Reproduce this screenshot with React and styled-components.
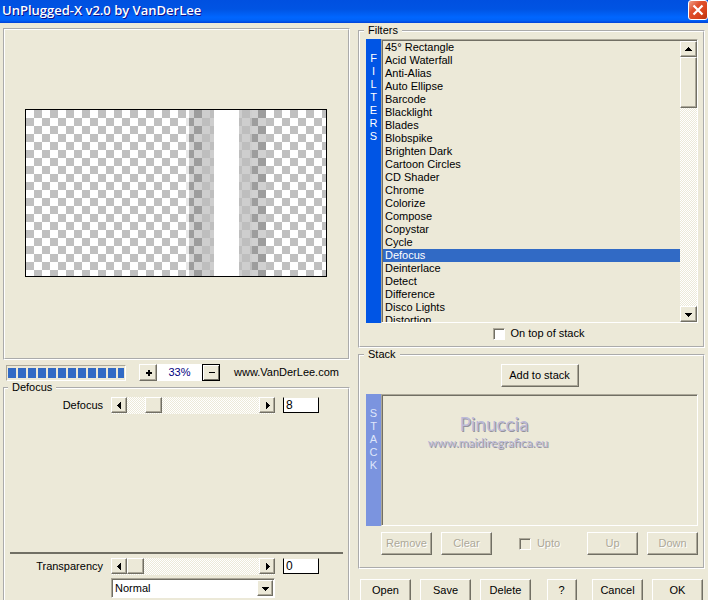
import React, { useState } from 'react';
import styled, { createGlobalStyle, css } from 'styled-components';

const face = '#ece9d8';
const shade = '#aca899';
const dark = '#716f64';

const GlobalStyle = createGlobalStyle`
  * {
    box-sizing: border-box;
  }
  body {
    margin: 0;
    background: ${face};
  }
  body, button, input, select {
    font-family: "Liberation Sans", Arial, sans-serif;
    font-size: 11px;
    line-height: 13px;
    color: #000;
  }
`;

const raised = css`
  background: ${face};
  border: 1px solid;
  border-color: #fff ${dark} ${dark} #fff;
  box-shadow: inset -1px -1px 0 ${shade};
`;

const sunken = css`
  border: 1px solid;
  border-color: ${shade} #fff #fff ${shade};
  box-shadow: inset 1px 1px 0 ${dark};
`;

const dither = css`
  background: repeating-conic-gradient(#fff 0 25%, ${face} 0 50%) 0 0 / 2px 2px;
`;

const Dialog = styled.main`
  height: 100vh;
  overflow: hidden;
  display: flex;
  flex-direction: column;
  background: ${face};
`;

const TitleBar = styled.header`
  flex: none;
  display: flex;
  justify-content: space-between;
  align-items: flex-start;
  height: 23px;
  padding-left: 2px;
  background: linear-gradient(#0050e0 0, #0054e3 40%, #0066ff 75%, #0062f8 88%, #0042d8 100%);
  h1 {
    margin: 0;
    font: 600 13px/20px "Open Sans", "Noto Sans", sans-serif;
    color: #fff;
    text-shadow: 1px 1px 0 #0f1089;
  }
`;

const CloseButton = styled.button`
  display: flex;
  align-items: center;
  justify-content: center;
  width: 20px;
  height: 20px;
  padding: 0;
  border: 1px solid #fff;
  border-radius: 3px;
  background: linear-gradient(135deg, #f0a088 0, #e0522f 35%, #d8431c 70%, #b83210 100%);
`;

const Columns = styled.div`
  flex: 1 0 auto;
  display: grid;
  grid-template-columns: minmax(0, 1fr) minmax(0, 1fr);
  gap: 8px;
  padding: 0 3px;
`;

const Column = styled.div`
  display: flex;
  flex-direction: column;
  padding-top: ${(p) => p.$top}px;
`;

const PreviewPanel = styled.section`
  display: flex;
  align-items: center;
  justify-content: center;
  padding: 79px 2px 81px 0;
  border: 2px groove #fff;
  svg {
    display: block;
    border: 1px solid #000;
  }
`;

const ToolRow = styled.div`
  display: flex;
  align-items: center;
  margin-top: 4px;
  padding-left: 3px;
  a {
    margin-left: 14px;
    color: #000;
    text-decoration: none;
  }
`;

const Progress = styled.div`
  width: 120px;
  height: 16px;
  margin-right: 13px;
  padding: 2px 1px;
  border: 1px solid;
  border-color: ${shade} #fff #fff ${shade};
  div {
    height: 100%;
    background: repeating-linear-gradient(90deg, #316ac5 0 8px, transparent 8px 10px);
  }
`;

const SmallButton = styled.button`
  display: flex;
  align-items: center;
  justify-content: center;
  width: 18px;
  height: 17px;
  padding: 0;
  ${raised}
  ${(p) => p.$focused && css`
    border-color: #000;
    box-shadow: inset 1px 1px 0 #fff, inset -1px -1px 0 ${dark};
  `}
`;

const Zoom = styled.output`
  width: 45px;
  line-height: 17px;
  text-align: center;
  color: #000080;
  background: #fff;
`;

const Group = styled.fieldset`
  display: flex;
  flex-direction: column;
  flex: ${(p) => (p.$grow ? '1 0 auto' : 'none')};
  min-width: 0;
  margin: 0;
  padding: ${(p) => p.$pad};
  border: 2px groove #fff;
  legend {
    margin-left: -2px;
    padding: 0 4px;
    line-height: 13px;
  }
`;

const ParamRow = styled.div`
  display: grid;
  grid-template-columns: 93px 164px 36px;
  column-gap: 8px;
  label {
    line-height: 17px;
    text-align: right;
  }
`;

const SliderBox = styled.div`
  display: flex;
  ${dither}
  input {
    flex: 1;
    min-width: 0;
    height: 16px;
    margin: 0;
    appearance: none;
    background: transparent;
  }
  input::-webkit-slider-thumb {
    appearance: none;
    width: 17px;
    height: 16px;
    ${raised}
  }
`;

const ArrowButton = styled.button`
  flex: none;
  display: flex;
  align-items: center;
  justify-content: center;
  width: 16px;
  height: 16px;
  padding: 0;
  ${raised}
`;

const NumberBox = styled.input`
  width: 36px;
  height: 16px;
  padding: 0 2px;
  border: 1px solid #000;
  border-top-color: ${face};
  border-radius: 0;
  background: #fff;
  font-size: 12px;
`;

const Divider = styled.hr`
  width: 100%;
  height: 2px;
  margin: auto 0 4px;
  border: none;
  background: ${dark};
`;

const ModeBox = styled.div`
  display: flex;
  grid-column: 2;
  height: 20px;
  margin-top: 3px;
  padding: 1px;
  background: #fff;
  ${sunken}
  select {
    flex: 1;
    padding: 0 2px;
    border: none;
    appearance: none;
    background: transparent;
  }
`;

const ListRow = styled.div`
  display: flex;
  height: ${(p) => p.$height}px;
`;

const Strip = styled.div`
  display: flex;
  flex-direction: column;
  align-items: center;
  width: 15px;
  padding-top: 13px;
  color: ${(p) => (p.$off ? '#dfe6fa' : '#fff')};
  background: ${(p) => (p.$off ? '#7b94df' : '#0055e5')};
`;

const ListFrame = styled.div`
  flex: 1;
  display: flex;
  min-width: 0;
  padding: 1px 0 0 1px;
  ${sunken}
`;

const FilterList = styled.select`
  flex: 1;
  min-width: 0;
  padding: 0;
  border: none;
  border-radius: 0;
  outline: none;
  overflow: hidden;
  appearance: none;
  background: ${face};
  option {
    min-height: 13px;
    padding: 0 2px;
    line-height: 13px;
    color: #000;
  }
  option:checked {
    color: #fff;
    -webkit-text-fill-color: #fff;
    background: #316ac5 linear-gradient(#316ac5, #316ac5);
  }
`;

const ScrollBar = styled.div`
  display: flex;
  flex-direction: column;
  width: 17px;
  ${dither}
  button {
    width: 17px;
  }
`;

const ScrollThumb = styled.div`
  height: 51px;
  margin-bottom: auto;
  ${raised}
`;

const Check = styled.label`
  display: flex;
  align-items: center;
  gap: 6px;
  color: ${(p) => (p.$off ? shade : '#000')};
  text-shadow: ${(p) => (p.$off ? '1px 1px 0 #fff' : 'none')};
  input {
    width: 12px;
    height: 12px;
    margin: 0;
    appearance: none;
    background: ${(p) => (p.$off ? face : '#fff')};
    ${sunken}
  }
`;

const Button = styled.button`
  width: ${(p) => p.$width || 51}px;
  height: 23px;
  padding: 0;
  ${raised}
  &:disabled {
    color: ${shade};
    text-shadow: 1px 1px 0 #fff;
  }
`;

const Center = styled.div`
  display: flex;
  justify-content: center;
  padding: ${(p) => p.$pad};
`;

const Spread = styled.div`
  display: flex;
  justify-content: space-between;
  align-items: center;
  padding: ${(p) => p.$pad};
`;

const Cluster = styled.div`
  display: flex;
  gap: 9px;
`;

const StackList = styled.div`
  width: 100%;
  padding: 16px 0 0 43px;
`;

const Watermark = styled.p`
  display: flex;
  flex-direction: column;
  width: 124px;
  margin: 0;
  text-align: center;
  font-family: "Comic Sans MS", Lato, sans-serif;
  color: #bcbad8;
  text-shadow: 1px 1px 0 #94929c;
  strong {
    padding-left: 12px;
    font-size: 19px;
    font-weight: normal;
    line-height: 23px;
  }
  span {
    font-size: 12px;
    line-height: 15px;
  }
`;

const filters = [
  '45° Rectangle', 'Acid Waterfall', 'Anti-Alias', 'Auto Ellipse', 'Barcode', 'Blacklight',
  'Blades', 'Blobspike', 'Brighten Dark', 'Cartoon Circles', 'CD Shader', 'Chrome',
  'Colorize', 'Compose', 'Copystar', 'Cycle', 'Defocus', 'Deinterlace', 'Detect',
  'Difference', 'Disco Lights', 'Distortion',
];

const arrows = {
  left: 'M5 0v7L1 3.5z',
  right: 'M2 0v7l4-3.5z',
  up: 'M0 5h7L3.5 1z',
  down: 'M0 2h7L3.5 6z',
};

const Arrow = ({ dir }) => (
  <svg width="7" height="7" viewBox="0 0 7 7" shapeRendering="crispEdges">
    <path d={arrows[dir]} />
  </svg>
);

const Preview = () => (
  <svg width="302" height="168" viewBox="0 0 300 166" shapeRendering="crispEdges">
    <defs>
      <pattern id="checker" width="16" height="16" patternUnits="userSpaceOnUse">
        <rect width="16" height="16" fill="#fff" />
        <path d="M8 0h8v8H8zM0 8h8v8H0z" fill="#c0c0c0" />
      </pattern>
    </defs>
    <rect width="300" height="166" fill="url(#checker)" />
    <rect x="160" width="3" height="166" fill="#fff" opacity="0.6" />
    <rect x="163" width="13" height="166" opacity="0.18" />
    <rect x="176" width="12" height="166" fill="#bebebe" opacity="0.75" />
    <rect x="188" width="25" height="166" fill="#fff" />
    <rect x="213" width="13" height="166" fill="#bebebe" opacity="0.75" />
    <rect x="226" width="14" height="166" opacity="0.18" />
  </svg>
);

const Slider = ({ id, label, value, max, onChange }) => (
  <>
    <label htmlFor={id}>{label}</label>
    <SliderBox>
      <ArrowButton aria-label={`Less ${label}`} onClick={() => onChange(Math.max(0, value - 1))}>
        <Arrow dir="left" />
      </ArrowButton>
      <input id={id} type="range" min="0" max={max} value={value} onChange={(e) => onChange(Number(e.target.value))} />
      <ArrowButton aria-label={`More ${label}`} onClick={() => onChange(Math.min(max, value + 1))}>
        <Arrow dir="right" />
      </ArrowButton>
    </SliderBox>
    <NumberBox aria-label={`${label} value`} value={value} onChange={(e) => onChange(Number(e.target.value) || 0)} />
  </>
);

const Letters = ({ text, off }) => (
  <Strip $off={off}>
    {text.split('').map((letter) => <span key={letter}>{letter}</span>)}
  </Strip>
);

export default function App() {
  const [filter, setFilter] = useState('Defocus');
  const [amount, setAmount] = useState(8);
  const [transparency, setTransparency] = useState(0);

  return (
    <Dialog>
      <GlobalStyle />
      <TitleBar>
        <h1>UnPlugged-X v2.0 by VanDerLee</h1>
        <CloseButton aria-label="Close">
          <svg width="12" height="12" viewBox="0 0 12 12">
            <path d="M1.5 1.5l9 9M10.5 1.5l-9 9" stroke="#fff" strokeWidth="2.2" />
          </svg>
        </CloseButton>
      </TitleBar>

      <Columns>
        <Column $top={5}>
          <PreviewPanel>
            <Preview />
          </PreviewPanel>
          <ToolRow>
            <Progress role="progressbar" aria-label="Preview progress" aria-valuenow={100}>
              <div />
            </Progress>
            <SmallButton aria-label="Zoom in">
              <svg width="7" height="7" viewBox="0 0 7 7" shapeRendering="crispEdges">
                <path d="M3 1h2v6H3zM1 3h6v2H1z" />
              </svg>
            </SmallButton>
            <Zoom>33%</Zoom>
            <SmallButton aria-label="Zoom out" $focused>
              <svg width="7" height="7" viewBox="0 0 7 7" shapeRendering="crispEdges">
                <path d="M1 3h6v1H1z" />
              </svg>
            </SmallButton>
            <a href="#vanderlee">www.VanDerLee.com</a>
          </ToolRow>
          <Group $grow $pad="3px 5px 6px">
            <legend>Defocus</legend>
            <ParamRow>
              <Slider id="amount" label="Defocus" value={amount} max={50} onChange={setAmount} />
            </ParamRow>
            <Divider />
            <ParamRow>
              <Slider id="transparency" label="Transparency" value={transparency} max={255} onChange={setTransparency} />
              <ModeBox>
                <select aria-label="Blend mode">
                  <option>Normal</option>
                </select>
                <ArrowButton as="span"><Arrow dir="down" /></ArrowButton>
              </ModeBox>
            </ParamRow>
          </Group>
        </Column>

        <Column $top={1}>
          <Group $pad="2px 5px 6px 6px">
            <legend>Filters</legend>
            <ListRow $height={284}>
              <Letters text="FILTERS" />
              <ListFrame>
                <FilterList size={22} aria-label="Filters" value={filter} onChange={(e) => setFilter(e.target.value)}>
                  {filters.map((name) => <option key={name}>{name}</option>)}
                </FilterList>
                <ScrollBar>
                  <ArrowButton aria-label="Scroll up"><Arrow dir="up" /></ArrowButton>
                  <ScrollThumb />
                  <ArrowButton aria-label="Scroll down"><Arrow dir="down" /></ArrowButton>
                </ScrollBar>
              </ListFrame>
            </ListRow>
            <Center $pad="4px 0 0 13px">
              <Check>
                <input type="checkbox" />
                On top of stack
              </Check>
            </Center>
          </Group>

          <Group $pad="3px 5px 12px 6px">
            <legend>Stack</legend>
            <Center $pad="0 0 7px 15px">
              <Button $width={78}>Add to stack</Button>
            </Center>
            <ListRow $height={132}>
              <Letters text="STACK" off />
              <ListFrame>
                <StackList>
                  <Watermark>
                    <strong>Pinuccia</strong>
                    <span>www.maidiregrafica.eu</span>
                  </Watermark>
                </StackList>
              </ListFrame>
            </ListRow>
            <Spread $pad="6px 0 0 15px">
              <Cluster>
                <Button disabled>Remove</Button>
                <Button disabled>Clear</Button>
              </Cluster>
              <Check $off>
                <input type="checkbox" disabled />
                Upto
              </Check>
              <Cluster>
                <Button disabled>Up</Button>
                <Button disabled>Down</Button>
              </Cluster>
            </Spread>
          </Group>

          <Spread $pad="10px 2px 4px">
            <Cluster>
              <Button>Open</Button>
              <Button>Save</Button>
              <Button>Delete</Button>
            </Cluster>
            <Button $width={30}>?</Button>
            <Cluster>
              <Button>Cancel</Button>
              <Button>OK</Button>
            </Cluster>
          </Spread>
        </Column>
      </Columns>
    </Dialog>
  );
}
